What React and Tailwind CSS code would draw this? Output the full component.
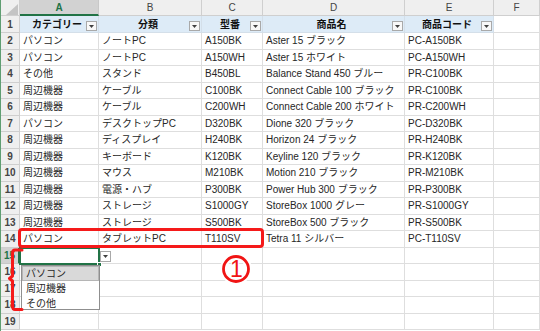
import React from "react";

const data = [
  ["パソコン", "ノートPC", "A150BK", "Aster 15 ブラック", "PC-A150BK"],
  ["パソコン", "ノートPC", "A150WH", "Aster 15 ホワイト", "PC-A150WH"],
  ["その他", "スタンド", "B450BL", "Balance Stand 450 ブルー", "PR-C100BK"],
  ["周辺機器", "ケーブル", "C100BK", "Connect Cable 100 ブラック", "PR-C100BK"],
  ["周辺機器", "ケーブル", "C200WH", "Connect Cable 200 ホワイト", "PR-C200WH"],
  ["パソコン", "デスクトップPC", "D320BK", "Dione 320 ブラック", "PC-D320BK"],
  ["周辺機器", "ディスプレイ", "H240BK", "Horizon 24 ブラック", "PR-H240BK"],
  ["周辺機器", "キーボード", "K120BK", "Keyline 120 ブラック", "PR-K120BK"],
  ["周辺機器", "マウス", "M210BK", "Motion 210 ブラック", "PR-M210BK"],
  ["周辺機器", "電源・ハブ", "P300BK", "Power Hub 300 ブラック", "PR-P300BK"],
  ["周辺機器", "ストレージ", "S1000GY", "StoreBox 1000 グレー", "PR-S1000GY"],
  ["周辺機器", "ストレージ", "S500BK", "StoreBox 500 ブラック", "PR-S500BK"],
  ["パソコン", "タブレットPC", "T110SV", "Tetra 11 シルバー", "PC-T110SV"],
];

const headers = ["カテゴリー", "分類", "型番", "商品名", "商品コード"];
const colLetters = ["A", "B", "C", "D", "E", "F"];

function Arrow() {
  return (
    <svg width="5" height="3" viewBox="0 0 5 3">
      <path d="M0 0h5L2.5 3z" fill="#404040" />
    </svg>
  );
}

function FilterBtn() {
  return (
    <div className="absolute right-[1px] bottom-[1px] w-[11px] h-[10px] border border-[#a9a9a9] bg-[#f8f8f8] flex items-center justify-center">
      <Arrow />
    </div>
  );
}

export default function App() {
  const rows = [];
  for (let r = 1; r <= 19; r++) {
    const sel = r === 15;
    rows.push(
      <div
        key={"h" + r}
        className={
          sel
            ? "bg-[#d2d2d2] text-[#217346] border-r-2 border-r-[#217346] border-b border-b-[#c8c8c8] flex items-center justify-center text-[10px] font-semibold"
            : "bg-[#efefef] text-[#444] border-r border-b border-[#cfcfcf] flex items-center justify-center text-[10px] font-semibold"
        }
      >
        {r}
      </div>
    );
    for (let c = 0; c < 6; c++) {
      if (r === 1 && c < 5) {
        rows.push(
          <div
            key={r + "-" + c}
            className="relative bg-[#ddebf7] border-r border-b border-[#d4dfe9] flex items-center justify-center font-bold text-[10px] text-[#111]"
          >
            <span className="pr-[4px]">{headers[c]}</span>
            <FilterBtn />
          </div>
        );
      } else {
        const v = r >= 2 && r <= 14 && c < 5 ? data[r - 2][c] : "";
        rows.push(
          <div
            key={r + "-" + c}
            className="border-r border-b border-[#dedede] flex items-center px-[3px] text-[10px] text-[#262626] whitespace-nowrap overflow-hidden"
          >
            {v}
          </div>
        );
      }
    }
  }

  return (
    <div className="relative w-[540px] h-[331px] overflow-hidden bg-white flex font-['Liberation_Sans','Noto_Sans_CJK_JP',sans-serif]">
      <div className="w-[1px] h-full bg-[#5f9e72] shrink-0" />
      <div className="grid grid-cols-[19px_79px_103px_61px_142px_89px_46px] grid-rows-[16px_17px_repeat(18,16.5px)] shrink-0">
        <div className="relative bg-[#efefef] border-r border-b border-[#cfcfcf]">
          <svg className="absolute left-[5px] top-[4px]" width="12" height="11" viewBox="0 0 12 11">
            <path d="M12 0V11H0z" fill="#c4c4c4" />
          </svg>
        </div>
        {colLetters.map((l, i) =>
          i === 0 ? (
            <div
              key={l}
              className="bg-[#d2d2d2] text-[#217346] border-r border-r-[#c8c8c8] border-b-2 border-b-[#217346] flex items-center justify-center text-[10px] font-semibold"
            >
              {l}
            </div>
          ) : (
            <div
              key={l}
              className="bg-[#efefef] text-[#444] border-r border-b border-[#cfcfcf] flex items-center justify-center text-[10px]"
            >
              {l}
            </div>
          )
        )}
        {rows}
      </div>

      {/* selected cell A15 */}
      <div className="absolute left-[19px] top-[247px] w-[81px] h-[18px] border-2 border-[#217346]" />
      <div className="absolute left-[97px] top-[262px] w-[5px] h-[5px] bg-[#217346] border border-white" />
      {/* dropdown button */}
      <div className="absolute left-[100px] top-[251px] w-[11px] h-[11px] border border-[#a9a9a9] bg-white flex items-center justify-center">
        <Arrow />
      </div>
      {/* dropdown list */}
      <div className="absolute left-[21px] top-[265px] w-[79px] h-[45px] bg-white border border-[#8f8f8f] flex flex-col text-[10px] text-[#262626]">
        <div className="h-[15px] bg-[#d9d9d9] border border-[#b5b5b5] flex items-center px-[3px]">パソコン</div>
        <div className="h-[15px] flex items-center px-[4px]">周辺機器</div>
        <div className="h-[14px] flex items-center px-[4px]">その他</div>
      </div>

      {/* red highlight rectangle */}
      <div className="absolute left-[18px] top-[228px] w-[246px] h-[20px] border-[3px] border-[#f51a1a] rounded-[4px]" />
      {/* bracket */}
      <svg className="absolute left-0 top-0" width="40" height="331" viewBox="0 0 40 331">
        <path
          d="M22 250 L15 250 Q12.5 250 12.5 253 L12.5 276 L9.5 278.5 L12.5 281 L12.5 306 Q12.5 309.5 15 309.5 L22 309.5"
          fill="none"
          stroke="#f51a1a"
          strokeWidth="3"
          strokeLinejoin="round"
          strokeLinecap="round"
        />
      </svg>
      {/* circled number */}
      <svg className="absolute left-[219px] top-[252px]" width="34" height="34" viewBox="0 0 34 34">
        <circle cx="17" cy="17" r="12.5" fill="none" stroke="#fff" strokeWidth="6.5" />
        <circle cx="17" cy="17" r="12.5" fill="none" stroke="#f01414" strokeWidth="2.8" />
        <text
          x="17.5"
          y="25"
          textAnchor="middle"
          fontSize="23"
          fontFamily="Liberation Sans, sans-serif"
          fill="#f01414"
          stroke="#fff"
          strokeWidth="2"
          paintOrder="stroke"
        >
          1
        </text>
      </svg>
    </div>
  );
}
